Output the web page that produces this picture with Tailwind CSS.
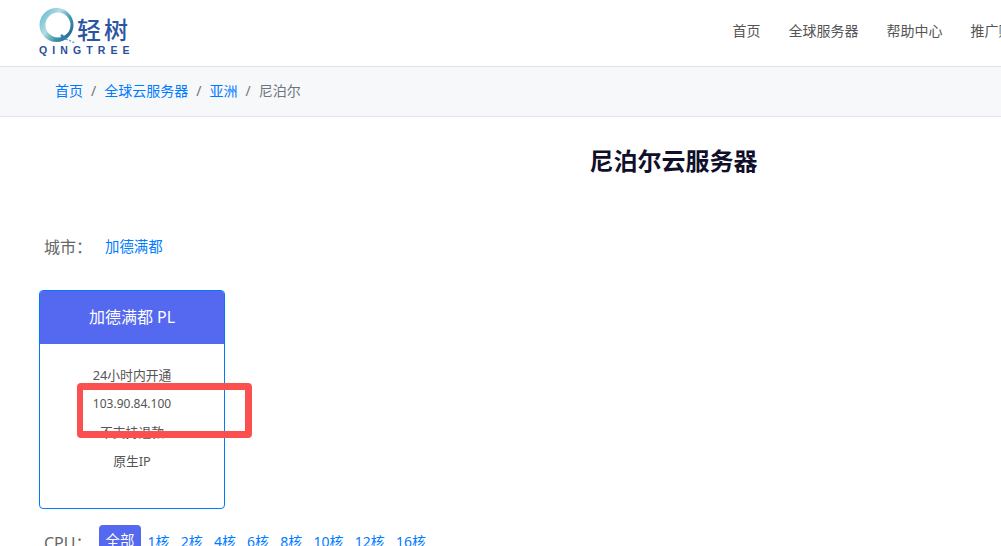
<!DOCTYPE html>
<html lang="zh">
<head>
<meta charset="utf-8">
<script src="https://cdn.jsdelivr.net/npm/@tailwindcss/browser@4"></script>
<title>尼泊尔云服务器</title>
</head>
<body class="bg-white overflow-hidden h-[546px] font-['Noto_Sans','Noto_Sans_CJK_SC',sans-serif] text-[#555]">
<div class="relative w-[1347px] h-[546px] overflow-hidden">
  <header class="h-[67px] border-b border-[#e1e4ee] flex items-start pl-[39px] pt-[8px]">
    <div class="flex flex-col w-[100px]">
      <div class="flex items-start h-[36px]">
        <svg width="38" height="36" viewBox="0 0 38 36" class="shrink-0">
          <defs>
            <linearGradient id="q" x1="0" y1="0.1" x2="1" y2="0.8">
              <stop offset="0" stop-color="#5fb6cf"/>
              <stop offset="0.4" stop-color="#b5dde4"/>
              <stop offset="0.7" stop-color="#3f97a8"/>
              <stop offset="1" stop-color="#1c5f92"/>
            </linearGradient>
          </defs>
          <path fill="url(#q)" fill-rule="evenodd" d="M17.5 0a17 17 0 1 0 0 34a17 17 0 1 0 0-34ZM19 4.5a12.5 12.5 0 1 1 0 25a12.5 12.5 0 1 1 0-25Z"/>
          <path d="M22 27 L27 31" stroke="#2f7fb0" stroke-width="2.5"/>
          <path d="M27 31 L36 35" stroke="#5aa3c8" stroke-width="1.4" stroke-dasharray="2 1.5"/>
        </svg>
        <span class="text-[#2b55a4] text-[24px] leading-[24px] mt-[9px] tracking-[3px] font-medium font-['Noto_Sans_CJK_SC',sans-serif]">轻树</span>
      </div>
      <span class="text-[#2b4f9c] text-[10.5px] leading-[10px] font-bold tracking-[5.1px] whitespace-nowrap mt-[1px] font-['Liberation_Sans',sans-serif]">QINGTREE</span>
    </div>
    <nav class="ml-[593.5px] mt-[12px] flex gap-[28px] text-[14px] text-[#555]">
      <a>首页</a><a>全球服务器</a><a>帮助中心</a><a>推广赚钱</a><a>登录</a>
    </nav>
  </header>

  <div class="h-[50px] bg-[#f7f8fa] border-b border-[#e1e4ee] flex items-center pl-[55px] pb-[3px] text-[14px]">
    <a class="text-[#007bff]">首页</a><span class="px-2 text-[#6c757d]">/</span>
    <a class="text-[#007bff]">全球云服务器</a><span class="px-2 text-[#6c757d]">/</span>
    <a class="text-[#007bff]">亚洲</a><span class="px-2 text-[#6c757d]">/</span>
    <span class="text-[#6c757d]">尼泊尔</span>
  </div>

  <h1 class="text-center text-[24px] leading-[32px] font-bold text-[#10102a] mt-[28px]">尼泊尔云服务器</h1>

  <div class="flex items-center mt-[58px] pl-[44px] h-[24px]">
    <span class="text-[16px] text-[#666] w-[61px]">城市：</span>
    <a class="text-[14.4px] text-[#007bff]">加德满都</a>
  </div>

  <div class="ml-[39px] mt-[31px] w-[186px] h-[219px] border border-[#007bff] rounded-[4px] overflow-hidden flex flex-col">
    <div class="h-[53px] bg-[#5468f0] text-white text-[16px] pb-[2px] flex items-center justify-center shrink-0">加德满都 PL</div>
    <ul class="pt-[17px] text-[12.8px] leading-[28.7px] text-center text-[#555]">
      <li>24小时内开通</li>
      <li class="text-[12px]">103.90.84.100</li>
      <li>不支持退款</li>
      <li>原生IP</li>
    </ul>
  </div>

  <div class="flex items-start mt-[16px] pl-[44px] text-[14px] text-[#007bff]">
    <span class="text-[#666] text-[16px] w-[55px] pt-[8px] leading-[21px]">CPU：</span>
    <a class="w-[42px] h-[34px] bg-[#5468f0] text-white rounded-[4px] text-center text-[14.4px] leading-[32px]">全部</a>
    <div class="flex gap-[11.2px] ml-[6.5px] pt-[6px] leading-[21px]">
      <a>1核</a><a>2核</a><a>4核</a><a>6核</a><a>8核</a><a>10核</a><a>12核</a><a>16核</a>
    </div>
  </div>

  <div class="absolute left-[77px] top-[383px] w-[175px] h-[55px] border-y-[7px] border-r-[7px] border-l-[6px] border-[#fb5050] rounded-[4px]"></div>
</div>
</body>
</html>
